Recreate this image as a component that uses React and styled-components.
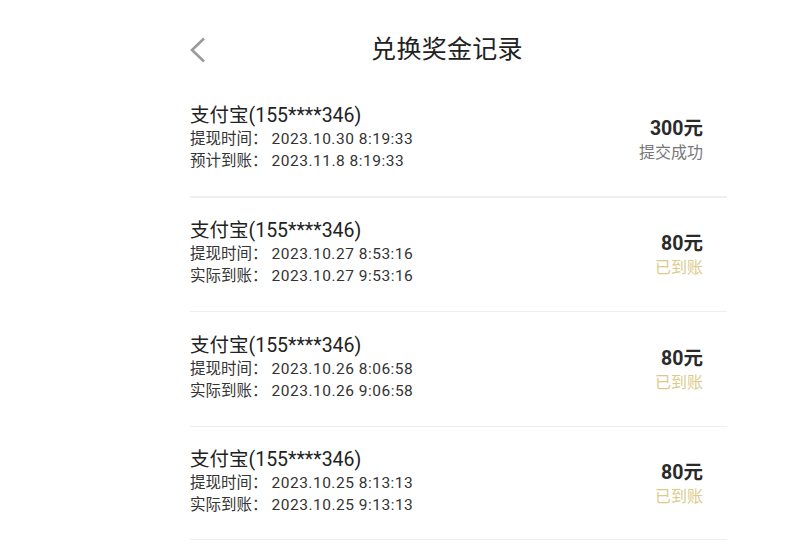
import React from "react";
import styled, { createGlobalStyle } from "styled-components";

const GlobalStyle = createGlobalStyle`
  html, body {
    margin: 0;
    padding: 0;
    background: #fff;
  }
  body {
    font-family: Roboto, "Noto Sans CJK SC", "Noto Sans", sans-serif;
    color: #222;
  }
`;

const records = [
  { account: "支付宝(155****346)", applied: "2023.10.30 8:19:33", arriveLabel: "预计到账", arrive: "2023.11.8 8:19:33", amount: "300元", status: "提交成功", done: false },
  { account: "支付宝(155****346)", applied: "2023.10.27 8:53:16", arriveLabel: "实际到账", arrive: "2023.10.27 9:53:16", amount: "80元", status: "已到账", done: true },
  { account: "支付宝(155****346)", applied: "2023.10.26 8:06:58", arriveLabel: "实际到账", arrive: "2023.10.26 9:06:58", amount: "80元", status: "已到账", done: true },
  { account: "支付宝(155****346)", applied: "2023.10.25 8:13:13", arriveLabel: "实际到账", arrive: "2023.10.25 9:13:13", amount: "80元", status: "已到账", done: true },
];

function App() {
  return (
    <Page>
      <GlobalStyle />
      <Column>
        <Header>
          <BackBtn>
            <svg width="16" height="26" viewBox="0 0 16 26">
              <polyline points="14,1.5 2,13 14,24.5" fill="none" stroke="#9a9a9a" strokeWidth="2.6" />
            </svg>
          </BackBtn>
          <Title>兑换奖金记录</Title>
          <span />
        </Header>
        {records.map((r, i) => (
          <Row key={i} first={i === 0}>
            <Info>
              <Account>{r.account}</Account>
              <Detail>
                提现时间：<Time>{r.applied}</Time>
              </Detail>
              <Detail>
                {r.arriveLabel}：<Time>{r.arrive}</Time>
              </Detail>
            </Info>
            <Result>
              <Amount>{r.amount}</Amount>
              <Status done={r.done}>{r.status}</Status>
            </Result>
          </Row>
        ))}
      </Column>
    </Page>
  );
}

const Page = styled.div`
  width: 100%;
  min-height: 554px;
  background: #fff;
`;

const Column = styled.div`
  width: 537px;
  margin-left: 190px;
`;

const Header = styled.div`
  height: 82px;
  display: grid;
  grid-template-columns: 1fr auto 1fr;
  align-items: center;
  padding: 18px 23px 0 0;
  box-sizing: border-box;
`;

const BackBtn = styled.div`
  display: flex;
  align-items: center;
  height: 26px;
`;

const Title = styled.div`
  font-size: 25px;
  line-height: 30px;
  color: #222;
  letter-spacing: 0.3px;
`;

const Row = styled.div`
  height: 114.5px;
  box-sizing: border-box;
  border-top: ${(p) => (p.first ? "none" : "1px solid #efefef")};
  border-bottom: ${(p) => (p.first ? "1px solid #efefef" : "none")};
  display: flex;
  align-items: center;
  justify-content: space-between;
  padding: 0 24px 0 0;
  &:last-child {
    border-bottom: 1px solid #efefef;
  }
`;

const Info = styled.div`
  display: flex;
  flex-direction: column;
  margin-top: -2px;
`;

const Account = styled.div`
  font-size: 19.5px;
  line-height: 24px;
  color: #222;
`;

const Detail = styled.div`
  font-size: 15.5px;
  line-height: 22px;
  color: #333;
`;

const Time = styled.span`
  margin-left: 4px;
  letter-spacing: 0.5px;
`;

const Result = styled.div`
  display: flex;
  flex-direction: column;
  align-items: flex-end;
  margin-top: 2px;
`;

const Amount = styled.div`
  font-size: 19.5px;
  line-height: 26px;
  font-weight: 700;
  color: #2a2a2a;
`;

const Status = styled.div`
  font-size: 16px;
  line-height: 22px;
  color: ${(p) => (p.done ? "#dccb8c" : "#777")};
`;

export default App;
